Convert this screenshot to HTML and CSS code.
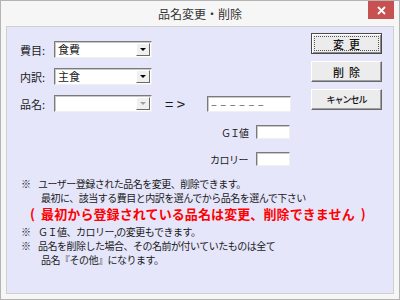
FILE: index.html
```html
<!DOCTYPE html>
<html lang="ja">
<head>
    <meta charset="UTF-8">
    <title>品名変更・削除</title>
    <link rel="stylesheet" href="styles.css">
</head>
<body>
    <div class="window">
        <div class="titlebar">
            <span></span>
            <span class="title">品名変更・削除</span>
            <button class="close" aria-label="閉じる">
                <svg width="9" height="9" viewBox="0 0 9 9"><path d="M1 1 L8 8 M8 1 L1 8" stroke="#fff" stroke-width="1.8"/></svg>
            </button>
        </div>

        <div class="client">
            <div class="top">
                <!-- 費目 / 内訳 / 品名 -->
                <div class="col-select">
                    <div class="row">
                        <span class="label">費目:</span>
                        <div class="combo"><span class="value">食費</span><span class="drop"></span></div>
                    </div>
                    <div class="row">
                        <span class="label">内訳:</span>
                        <div class="combo"><span class="value">主食</span><span class="drop"></span></div>
                    </div>
                    <div class="row">
                        <span class="label">品名:</span>
                        <div class="combo"><span class="value"></span><span class="drop disabled"></span></div>
                    </div>
                </div>

                <div class="col-edit">
                    <div class="row-new">
                        <span class="arrow">= &gt;</span>
                        <div class="textbox wide">– – – – – –</div>
                    </div>
                    <div class="row-num">
                        <span class="label-num gi">ＧＩ値</span>
                        <div class="textbox small"></div>
                    </div>
                    <div class="row-num">
                        <span class="label-num">カロリー</span>
                        <div class="textbox small"></div>
                    </div>
                </div>

                <div class="col-buttons">
                    <button class="btn default"><span class="focus">変&nbsp;&nbsp;更</span></button>
                    <button class="btn">削&nbsp;&nbsp;除</button>
                    <button class="btn small-text">キャンセル</button>
                </div>
            </div>

            <div class="notes">
                <div class="note"><span class="mark">※</span><span>ユーザー登録された品名を変更、削除できます。</span></div>
                <div class="note cont">最初に、該当する費目と内訳を選んでから品名を選んで下さい</div>
                <div class="warning">(&nbsp;&nbsp;最初から登録されている品名は変更、削除できません&nbsp;&nbsp;)</div>
                <div class="note first"><span class="mark">※</span><span>ＧＩ値、カロリー,の変更もできます。</span></div>
                <div class="note"><span class="mark">※</span><span>品名を削除した場合、その名前が付いていたものは全て</span></div>
                <div class="note cont">品名『その他』になります。</div>
            </div>
        </div>
    </div>
</body>
</html>
```

FILE: styles.css
```css
* {
    box-sizing: border-box;
}

body {
    margin: 0;
    font-family: "Noto Sans CJK JP", "Noto Sans", sans-serif;
    color: #1a1a1a;
    background: #fff;
}

.window {
    width: 400px;
    height: 300px;
    display: flex;
    flex-direction: column;
    border: 1px solid #b4b4b4;
    background: #f6f6f6;
    padding: 0 5px 5px 5px;
}

.titlebar {
    height: 25px;
    display: grid;
    grid-template-columns: 26px 1fr 26px;
    align-items: start;
}

.title {
    text-align: center;
    font-size: 12px;
    line-height: 26px;
    color: #333;
}

.close {
    width: 26px;
    height: 18px;
    margin: 0;
    padding: 0;
    border: none;
    background: #c75050;
    display: flex;
    align-items: center;
    justify-content: center;
}

.client {
    flex: 1;
    border: 1px solid #cfcfcf;
    background: #e6e6fa;
}

.top {
    display: flex;
    align-items: flex-start;
    padding-left: 13px;
    height: 139px;
}

/* left column */
.col-select {
    display: flex;
    flex-direction: column;
    gap: 10px;
    padding-top: 14px;
}

.row {
    display: flex;
    align-items: center;
    height: 17px;
}

.label {
    width: 34px;
    font-size: 11px;
}

.combo {
    width: 98px;
    height: 17px;
    display: flex;
    align-items: center;
    background: #fff;
    border: 1px solid;
    border-color: #7a7a7a #f0f0f0 #f0f0f0 #7a7a7a;
    box-shadow: inset 1px 1px 0 #c8c8c8;
    padding: 1px;
}

.combo .value {
    flex: 1;
    font-size: 11px;
    line-height: 13px;
    padding-left: 2px;
}

.drop {
    width: 14px;
    height: 13px;
    background: #f0f0f0;
    border: 1px solid;
    border-color: #fff #696969 #696969 #fff;
    display: flex;
    align-items: center;
    justify-content: center;
}

.drop::after {
    content: "";
    border-left: 3px solid transparent;
    border-right: 3px solid transparent;
    border-top: 3px solid #000;
}

.drop.disabled::after {
    border-top-color: #a0a0a0;
}

/* middle column */
.col-edit {
    width: 139px;
    padding-top: 69px;
    display: flex;
    flex-direction: column;
    gap: 13px;
}

.row-new {
    display: flex;
    align-items: center;
    height: 16px;
}

.arrow {
    width: 55px;
    padding-left: 13px;
    font-size: 15px;
    line-height: 16px;
    letter-spacing: 0;
}

.textbox {
    background: #fff;
    border: 1px solid;
    border-color: #7a7a7a #f0f0f0 #f0f0f0 #7a7a7a;
    box-shadow: inset 1px 1px 0 #c8c8c8;
}

.textbox.wide {
    width: 84px;
    height: 16px;
    font-size: 11px;
    line-height: 14px;
    padding-left: 3px;
    color: #555;
    letter-spacing: 0.5px;
}

.row-num {
    display: flex;
    justify-content: flex-end;
    align-items: center;
    gap: 8px;
    height: 14px;
    padding-right: 1px;
}

.textbox.small {
    width: 34px;
    height: 14px;
}

.label-num {
    font-size: 10px;
    letter-spacing: -0.5px;
}

.label-num.gi {
    letter-spacing: -1px;
}

/* right column */
.col-buttons {
    margin-left: 20px;
    padding-top: 6px;
    display: flex;
    flex-direction: column;
    gap: 7px;
}

.btn {
    width: 71px;
    height: 21px;
    margin: 0;
    padding: 0;
    font-family: inherit;
    font-size: 11px;
    font-weight: 500;
    color: #111;
    background: #ececec;
    border: 1px solid;
    border-color: #fff #696969 #696969 #fff;
    box-shadow: inset -1px -1px 0 #a0a0a0;
    display: flex;
    align-items: center;
    justify-content: center;
}

.btn.default {
    border: 1px solid #4a4a4a;
    box-shadow: inset 1px 1px 0 #fff, inset -1px -1px 0 #8a8a8a;
    padding: 2px;
}

.btn .focus {
    width: 100%;
    height: 100%;
    display: flex;
    align-items: center;
    justify-content: center;
    border: 1px dotted #555;
}

.btn.small-text {
    font-size: 9px;
    letter-spacing: -1px;
}

/* notes */
.notes {
    margin-top: 11px;
    font-size: 10px;
    line-height: 14px;
    letter-spacing: -0.5px;
}

.note {
    display: flex;
    padding-left: 14px;
}

.note .mark {
    width: 17px;
    flex-shrink: 0;
}

.note.cont {
    padding-left: 34px;
}

.note.first {
    margin-top: 3px;
}

.warning {
    padding-left: 23px;
    font-size: 13px;
    line-height: 17px;
    font-weight: bold;
    color: #f00;
    letter-spacing: 0.1px;
}
```
